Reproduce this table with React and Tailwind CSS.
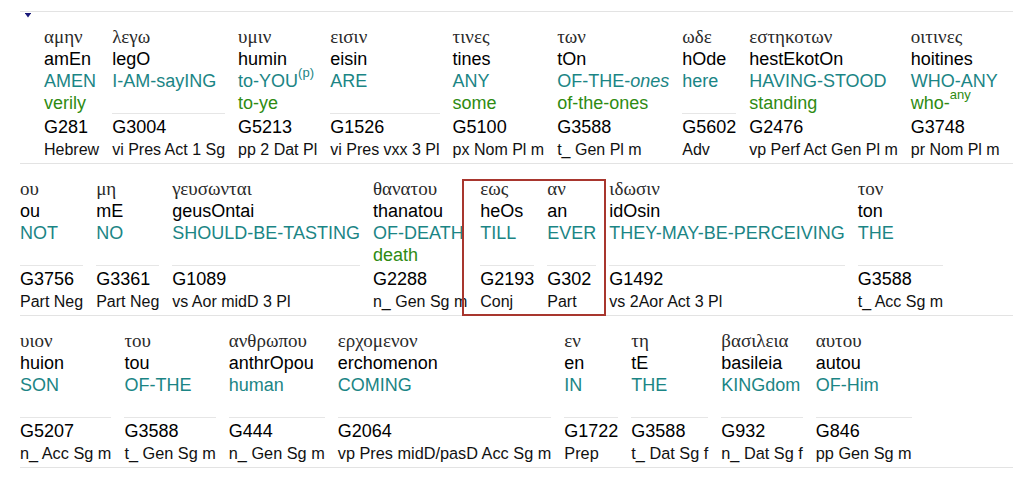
const rows = [
  {
    indent: true,
    parse: "text-[16px]",
    words: [
      { gr: "αμην", tr: "amEn", en: "AMEN", alt: "verily", st: "G281", pa: "Hebrew" },
      { gr: "λεγω", tr: "legO", en: "I-AM-sayING", st: "G3004", pa: "vi Pres Act 1 Sg" },
      { gr: "υμιν", tr: "humin", en: <>to-YOU<sup className="text-[13px] align-[4px]">(p)</sup></>, alt: "to-ye", st: "G5213", pa: "pp 2 Dat Pl" },
      { gr: "εισιν", tr: "eisin", en: "ARE", st: "G1526", pa: "vi Pres vxx 3 Pl" },
      { gr: "τινες", tr: "tines", en: "ANY", alt: "some", st: "G5100", pa: "px Nom Pl m" },
      { gr: "των", tr: "tOn", en: <>OF-THE-<i>ones</i></>, alt: "of-the-ones", st: "G3588", pa: "t_ Gen Pl m" },
      { gr: "ωδε", tr: "hOde", en: "here", st: "G5602", pa: "Adv" },
      { gr: "εστηκοτων", tr: "hestEkotOn", en: "HAVING-STOOD", alt: "standing", st: "G2476", pa: "vp Perf Act Gen Pl m" },
      { gr: "οιτινες", tr: "hoitines", en: "WHO-ANY", alt: <>who-<sup className="text-[13px] align-[4px]">any</sup></>, st: "G3748", pa: "pr Nom Pl m" },
    ],
  },
  {
    parse: "text-[16px]",
    words: [
      { gr: "ου", tr: "ou", en: "NOT", st: "G3756", pa: "Part Neg" },
      { gr: "μη", tr: "mE", en: "NO", st: "G3361", pa: "Part Neg" },
      { gr: "γευσωνται", tr: "geusOntai", en: "SHOULD-BE-TASTING", st: "G1089", pa: "vs Aor midD 3 Pl" },
      { gr: "θανατου", tr: "thanatou", en: "OF-DEATH", alt: "death", st: "G2288", pa: "n_ Gen Sg m" },
      { box: [
        { gr: "εως", tr: "heOs", en: "TILL", st: "G2193", pa: "Conj" },
        { gr: "αν", tr: "an", en: "EVER", st: "G302", pa: "Part" },
      ] },
      { gr: "ιδωσιν", tr: "idOsin", en: "THEY-MAY-BE-PERCEIVING", st: "G1492", pa: "vs 2Aor Act 3 Pl" },
      { gr: "τον", tr: "ton", en: "THE", st: "G3588", pa: "t_ Acc Sg m" },
    ],
  },
  {
    parse: "text-[16.3px]",
    words: [
      { gr: "υιον", tr: "huion", en: "SON", st: "G5207", pa: "n_ Acc Sg m" },
      { gr: "του", tr: "tou", en: "OF-THE", st: "G3588", pa: "t_ Gen Sg m" },
      { gr: "ανθρωπου", tr: "anthrOpou", en: "human", st: "G444", pa: "n_ Gen Sg m" },
      { gr: "ερχομενον", tr: "erchomenon", en: "COMING", st: "G2064", pa: "vp Pres midD/pasD Acc Sg m" },
      { gr: "εν", tr: "en", en: "IN", st: "G1722", pa: "Prep" },
      { gr: "τη", tr: "tE", en: "THE", st: "G3588", pa: "t_ Dat Sg f" },
      { gr: "βασιλεια", tr: "basileia", en: "KINGdom", st: "G932", pa: "n_ Dat Sg f" },
      { gr: "αυτου", tr: "autou", en: "OF-Him", st: "G846", pa: "pp Gen Sg m" },
    ],
  },
];

function Word({ w, parse }) {
  return (
    <div className="flex flex-col pr-[13px] whitespace-nowrap">
      <div className="h-[22px] leading-[22px] text-[19px] text-[#2a2a2a]" style={{ fontFamily: '"Liberation Serif", serif' }}>{w.gr}</div>
      <div className="h-[22px] leading-[22px] text-[18px] text-black">{w.tr}</div>
      <div className="h-[22px] leading-[22px] text-[18px] text-[#1b8585]">{w.en}</div>
      {w.alt ? (
        <div className="h-[22px] leading-[22px] text-[18px] text-[#2e8b12]">{w.alt}</div>
      ) : (
        <div className="h-[22px] border-b border-[#e6e6e6]" />
      )}
      <div className="h-[26px] leading-[26px] text-[18px] text-black">{w.st}</div>
      <div className={"h-[19px] leading-[19px] text-[#111] " + parse}>{w.pa}</div>
    </div>
  );
}

export default function App() {
  return (
    <div className="bg-white min-h-[479px] pt-[11px] pl-[20px]" style={{ fontFamily: '"Liberation Sans", Arial, sans-serif' }}>
      <div className="border-t border-[#e3e3e3]">
        {rows.map((row, i) => (
          <div key={i} className={"relative flex border-b border-[#e3e3e3] pt-[14px] pb-[4px] " + (row.indent ? "pl-[24px]" : "")}>
            {row.indent && (
              <svg className="absolute left-[5px] top-[1px]" width="6" height="5" viewBox="0 0 6 5">
                <rect x="0" y="0" width="6" height="1" fill="#1a1a7a" />
                <polygon points="0.5,1 5.5,1 3,4.5" fill="#1a1a7a" />
              </svg>
            )}
            {row.words.map((w, j) =>
              w.box ? (
                <div key={j} className="relative flex">
                  <div className="absolute left-[-18px] right-[3px] top-[1px] bottom-[-5px] border-2 border-[#a8362e]" />
                  {w.box.map((b, k) => <Word key={k} w={b} parse={row.parse} />)}
                </div>
              ) : (
                <Word key={j} w={w} parse={row.parse} />
              )
            )}
          </div>
        ))}
      </div>
    </div>
  );
}
